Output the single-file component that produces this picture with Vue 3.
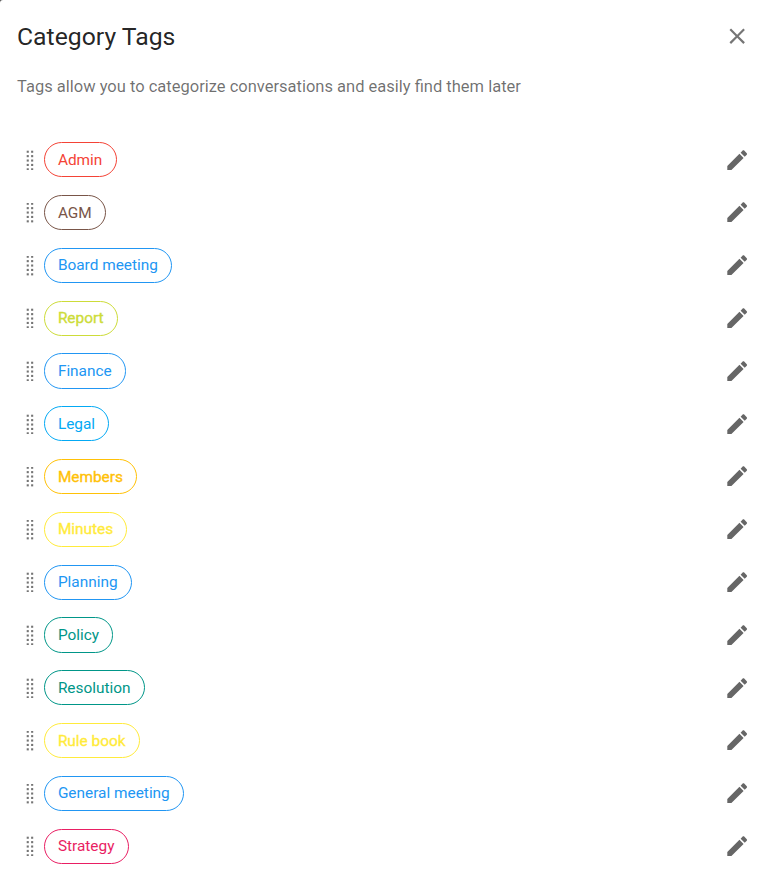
<script setup>
const tags = [
  { name: 'Admin', color: '#f44336' },
  { name: 'AGM', color: '#795548' },
  { name: 'Board meeting', color: '#2196f3' },
  { name: 'Report', color: '#cddc39', light: true },
  { name: 'Finance', color: '#2196f3' },
  { name: 'Legal', color: '#03a9f4' },
  { name: 'Members', color: '#ffc107', light: true },
  { name: 'Minutes', color: '#ffeb3b', light: true },
  { name: 'Planning', color: '#2196f3' },
  { name: 'Policy', color: '#009688' },
  { name: 'Resolution', color: '#009688' },
  { name: 'Rule book', color: '#ffeb3b', light: true },
  { name: 'General meeting', color: '#2196f3' },
  { name: 'Strategy', color: '#e91e63' },
]
</script>

<template>
  <main class="card">
    <header class="head">
      <h1>Category Tags</h1>
      <button class="icon-btn" aria-label="Close">
        <svg viewBox="0 0 24 24"><path d="M19 6.41 17.59 5 12 10.59 6.41 5 5 6.41 10.59 12 5 17.59 6.41 19 12 13.41 17.59 19 19 17.59 13.41 12z" /></svg>
      </button>
    </header>
    <p class="hint">Tags allow you to categorize conversations and easily find them later</p>
    <ul class="list">
      <li v-for="tag in tags" :key="tag.name" class="row">
        <svg class="grip" viewBox="0 0 8 20">
          <template v-for="y in 5" :key="y">
            <rect v-for="x in 2" :key="x" :x="x * 4.4 - 3.7" :y="y * 4.4 - 4.1" width="2.1" height="2.1" />
          </template>
        </svg>
        <span class="chip" :class="{ light: tag.light }" :style="{ color: tag.color }">{{ tag.name }}</span>
        <button class="icon-btn edit" aria-label="Edit tag">
          <svg viewBox="0 0 24 24"><path d="M20.71 7.04c.39-.39.39-1.04 0-1.41l-2.34-2.34c-.37-.39-1.02-.39-1.41 0l-1.84 1.83 3.75 3.75M3 17.25V21h3.75L17.81 9.93l-3.75-3.75L3 17.25z" /></svg>
        </button>
      </li>
    </ul>
  </main>
</template>

<style>
body { background: #555; overflow: hidden; }
</style>

<style scoped>
.card {
  box-sizing: border-box;
  height: 873px;
  overflow: hidden;
  padding: 17.6px 17.6px 0 17px;
  border-top-left-radius: 3px;
  font-family: Roboto, sans-serif;
  background: #fff;
}
.head { display: flex; align-items: center; justify-content: space-between; height: 37px; }
h1 { margin: 0.6px 0 0; font-size: 24.75px; font-weight: 400; line-height: 35px; color: rgba(0, 0, 0, 0.87); }
.icon-btn { display: flex; margin: 0 2.2px 0 0; padding: 0; border: 0; background: none; color: #757575; }
.icon-btn svg { width: 26.4px; height: 26.4px; fill: currentColor; }
.hint { margin: 19px 0 0; font-size: 16.5px; line-height: 26.4px; color: rgba(0, 0, 0, 0.57); }
.list { margin: 33.4px 0 0; padding: 0; list-style: none; }
.row { display: flex; align-items: center; height: 52.8px; }
.grip { width: 8px; height: 20px; margin: 0 9.6px 0 9.4px; padding-top: 0.4px; fill: #757575; }
.chip {
  box-sizing: border-box;
  height: 35.2px;
  padding: 0.6px 13.2px 0 12.9px;
  border: 1px solid currentColor;
  border-radius: 17.6px;
  font-size: 15.4px;
  line-height: 33.8px;
  white-space: nowrap;
}
.light { -webkit-text-stroke: 0.35px currentColor; }
.edit { margin-left: auto; padding-top: 0.1px; color: #666; }
</style>
